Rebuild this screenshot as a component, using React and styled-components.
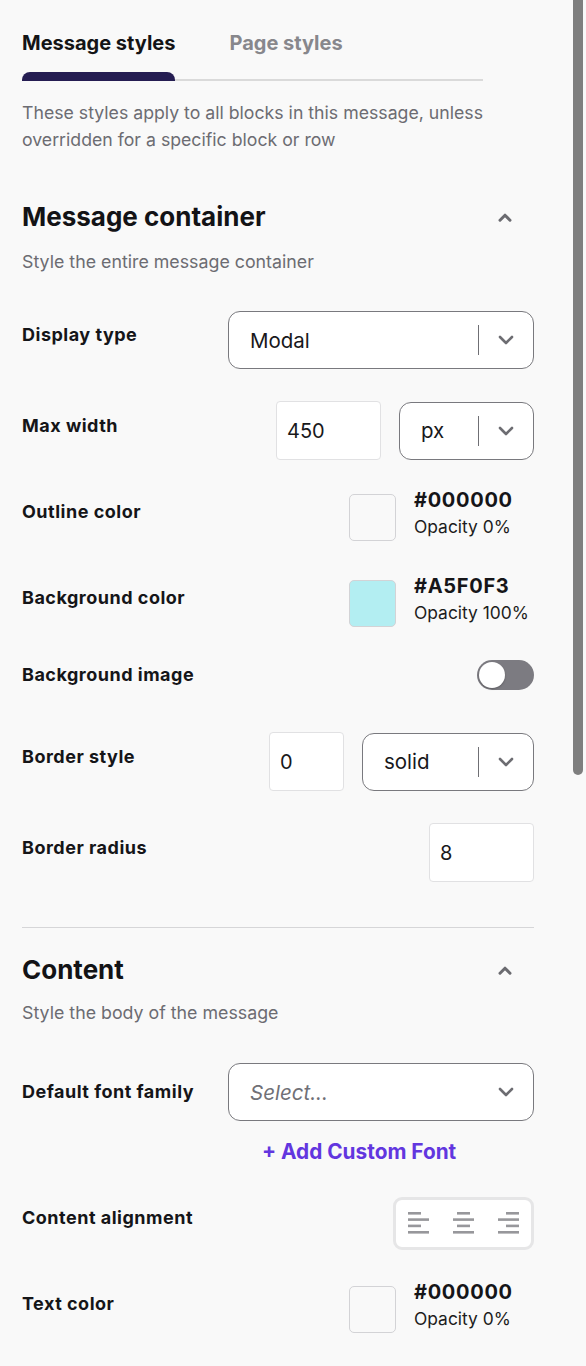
import React, { useState } from "react";
import styled, { createGlobalStyle } from "styled-components";

const GlobalStyle = createGlobalStyle`
  html, body {
    margin: 0;
    padding: 0;
    background: #f9f9f9;
    min-height: 100%;
  }
  body {
    font-family: Inter, "Noto Sans", "Liberation Sans", sans-serif;
    color: #151518;
    overflow: hidden;
  }
  * { box-sizing: border-box; }
`;

const Panel = styled.div`
  position: relative;
  width: 586px;
  min-height: 1366px;
  padding: 29px 52px 0 22px;
  background: #f9f9f9;
`;

const Scrollbar = styled.div`
  position: absolute;
  top: 0;
  right: 3px;
  width: 10px;
  height: 775px;
  border-radius: 0 0 5px 5px;
  background: #7f7f7f;
`;

const TabList = styled.div`
  display: flex;
  gap: 54px;
  width: 461px;
  border-bottom: 2px solid #dadada;
`;

const Tab = styled.button`
  position: relative;
  border: 0;
  background: none;
  padding: 0 0 22px;
  margin: 0;
  font-family: inherit;
  font-size: 20px;
  line-height: 28px;
  font-weight: 700;
  color: ${(p) => (p.$active ? "#141416" : "#87878c")};
  cursor: pointer;

  &::after {
    content: "";
    display: ${(p) => (p.$active ? "block" : "none")};
    position: absolute;
    left: 0;
    right: 0;
    bottom: -2px;
    height: 9px;
    border-radius: 8px 8px 0 0;
    background: #251d52;
  }
`;

const Intro = styled.p`
  margin: 18px 0 0;
  font-size: 17.7px;
  line-height: 27px;
  color: #6c6c72;
`;

const Section = styled.section`
  padding-top: ${(p) => p.$top}px;
`;

const SectionHead = styled.div`
  display: flex;
  align-items: center;
  justify-content: space-between;
  padding-right: 22px;
`;

const SectionTitle = styled.h2`
  margin: 0;
  font-size: 26px;
  line-height: 32px;
  font-weight: 700;
  color: #131316;
`;

const SectionHint = styled.p`
  margin: ${(p) => p.$mt || 15}px 0 0;
  font-size: 17.8px;
  line-height: 27px;
  color: #6c6c72;
`;

const Row = styled.div`
  display: flex;
  align-items: center;
  justify-content: space-between;
  min-height: 58px;
  margin-top: ${(p) => p.$mt}px;
`;

const Label = styled.div`
  font-size: 18px;
  line-height: 24px;
  font-weight: 700;
  letter-spacing: 0.5px;
  color: #151518;
  margin-bottom: ${(p) => (p.$centered ? 0 : 10)}px;
`;

const Controls = styled.div`
  display: flex;
  align-items: center;
  gap: 18px;
`;

const SelectBox = styled.div`
  display: flex;
  align-items: center;
  width: ${(p) => p.$w}px;
  height: 58px;
  border: 1px solid #79797e;
  border-radius: 12px;
  background: #fff;
`;

const SelectValue = styled.div`
  flex: 1;
  padding-left: 21px;
  font-size: 20.5px;
  color: ${(p) => (p.$placeholder ? "#707076" : "#18181b")};
  font-style: ${(p) => (p.$placeholder ? "italic" : "normal")};
`;

const SelectDivider = styled.span`
  width: 1px;
  height: 30px;
  background: #6f6f74;
`;

const SelectArrow = styled.span`
  display: flex;
  align-items: center;
  justify-content: center;
  width: 54px;
  height: 100%;
`;

const TextInput = styled.div`
  display: flex;
  align-items: center;
  width: ${(p) => p.$w}px;
  height: 59px;
  padding-left: 10px;
  border: 1px solid #e1e1e3;
  border-radius: 4px;
  background: #fff;
  font-size: 20px;
  color: #18181b;
`;

const ColorPick = styled.div`
  display: flex;
  align-items: center;
  gap: 18px;
  width: 185px;
`;

const Swatch = styled.div`
  width: 47px;
  height: 47px;
  border: 1px solid #d3d3d6;
  border-radius: 5px;
  background: ${(p) => p.$color};
`;

const ColorText = styled.div`
  display: flex;
  flex-direction: column;
  margin-top: -8px;
`;

const HexValue = styled.span`
  font-size: 20px;
  line-height: 28px;
  font-weight: 700;
  letter-spacing: 0.7px;
  color: #151518;
`;

const OpacityValue = styled.span`
  font-size: 17.4px;
  line-height: 26px;
  color: #1c1c20;
`;

const Switch = styled.button`
  display: flex;
  align-items: center;
  width: 57px;
  height: 30px;
  padding: 0 2px;
  border: 0;
  border-radius: 15px;
  background: #7c7b81;
  cursor: pointer;

  &::before {
    content: "";
    width: 26px;
    height: 26px;
    border-radius: 50%;
    background: #fff;
    box-shadow: 0 1px 2px rgba(0, 0, 0, 0.25);
  }
`;

const Divider = styled.hr`
  margin: 45px 0 0;
  border: 0;
  border-top: 1px solid #d6d6d8;
`;

const AddFont = styled.button`
  display: block;
  margin: 17px 0 0 240px;
  padding: 0;
  border: 0;
  background: none;
  font-family: inherit;
  font-size: 20.8px;
  line-height: 28px;
  font-weight: 700;
  color: #6236df;
  cursor: pointer;
`;

const AlignGroup = styled.div`
  display: flex;
  align-items: center;
  justify-content: center;
  gap: 24px;
  width: 141px;
  height: 53px;
  border: 3px solid #e6e6e7;
  border-radius: 9px;
  background: #fff;
`;

const AlignButton = styled.button`
  display: flex;
  padding: 0;
  border: 0;
  background: none;
  cursor: pointer;
`;

const ChevronDown = () => (
  <svg width="16" height="10" viewBox="0 0 16 10" fill="none">
    <path d="M2 2l6 6 6-6" stroke="#6d6d72" strokeWidth="2.6" strokeLinecap="round" strokeLinejoin="round" />
  </svg>
);

const ChevronUp = () => (
  <svg width="14" height="9" viewBox="0 0 14 9" fill="none">
    <path d="M2 7.2l5-5 5 5" stroke="#6b6b70" strokeWidth="3" strokeLinecap="round" strokeLinejoin="round" />
  </svg>
);

const AlignIcon = ({ side }) => {
  const shortX = side === "left" ? 0 : side === "center" ? 4 : 8;
  return (
    <svg width="21" height="22" viewBox="0 0 21 22">
      <g fill="#97979b">
        <rect x={shortX} y="0" width="13" height="2.6" />
        <rect x="0" y="6.3" width="21" height="2.6" />
        <rect x={shortX} y="12.6" width="13" height="2.6" />
        <rect x="0" y="19" width="21" height="2.6" />
      </g>
    </svg>
  );
};

const Select = ({ width, value, placeholder, divider = true }) => (
  <SelectBox $w={width}>
    <SelectValue $placeholder={!value}>{value || placeholder}</SelectValue>
    {divider && <SelectDivider />}
    <SelectArrow>
      <ChevronDown />
    </SelectArrow>
  </SelectBox>
);

const Color = ({ hex, swatch, opacity }) => (
  <ColorPick>
    <Swatch $color={swatch} />
    <ColorText>
      <HexValue>{hex}</HexValue>
      <OpacityValue>Opacity {opacity}%</OpacityValue>
    </ColorText>
  </ColorPick>
);

export default function App() {
  const [tab, setTab] = useState("message");

  return (
    <>
      <GlobalStyle />
      <Panel>
        <TabList>
          <Tab $active={tab === "message"} onClick={() => setTab("message")}>
            Message styles
          </Tab>
          <Tab $active={tab === "page"} onClick={() => setTab("page")}>
            Page styles
          </Tab>
        </TabList>
        <Intro>
          These styles apply to all blocks in this message, unless
          <br />
          overridden for a specific block or row
        </Intro>

        <Section $top={48}>
          <SectionHead>
            <SectionTitle>Message container</SectionTitle>
            <ChevronUp />
          </SectionHead>
          <SectionHint>Style the entire message container</SectionHint>

          <Row $mt={36}>
            <Label>Display type</Label>
            <Select width={306} value="Modal" />
          </Row>
          <Row $mt={32}>
            <Label>Max width</Label>
            <Controls>
              <TextInput $w={105}>450</TextInput>
              <Select width={135} value="px" />
            </Controls>
          </Row>
          <Row $mt={28}>
            <Label>Outline color</Label>
            <Color hex="#000000" swatch="#f9f9f9" opacity={0} />
          </Row>
          <Row $mt={28}>
            <Label>Background color</Label>
            <Color hex="#A5F0F3" swatch="#b3eef2" opacity={100} />
          </Row>
          <Row $mt={14}>
            <Label $centered>Background image</Label>
            <Switch aria-label="Background image" />
          </Row>
          <Row $mt={28}>
            <Label>Border style</Label>
            <Controls>
              <TextInput $w={75}>0</TextInput>
              <Select width={172} value="solid" />
            </Controls>
          </Row>
          <Row $mt={32}>
            <Label>Border radius</Label>
            <TextInput $w={105}>8</TextInput>
          </Row>
        </Section>

        <Divider />

        <Section $top={26}>
          <SectionHead>
            <SectionTitle>Content</SectionTitle>
            <ChevronUp />
          </SectionHead>
          <SectionHint $mt={13}>Style the body of the message</SectionHint>

          <Row $mt={37}>
            <Label $centered>Default font family</Label>
            <Select width={306} placeholder="Select..." divider={false} />
          </Row>
          <AddFont>+ Add Custom Font</AddFont>
          <Row $mt={28}>
            <Label>Content alignment</Label>
            <AlignGroup>
              <AlignButton aria-label="Align left">
                <AlignIcon side="left" />
              </AlignButton>
              <AlignButton aria-label="Align center">
                <AlignIcon side="center" />
              </AlignButton>
              <AlignButton aria-label="Align right">
                <AlignIcon side="right" />
              </AlignButton>
            </AlignGroup>
          </Row>
          <Row $mt={28}>
            <Label>Text color</Label>
            <Color hex="#000000" swatch="#f9f9f9" opacity={0} />
          </Row>
        </Section>
        <Scrollbar />
      </Panel>
    </>
  );
}
